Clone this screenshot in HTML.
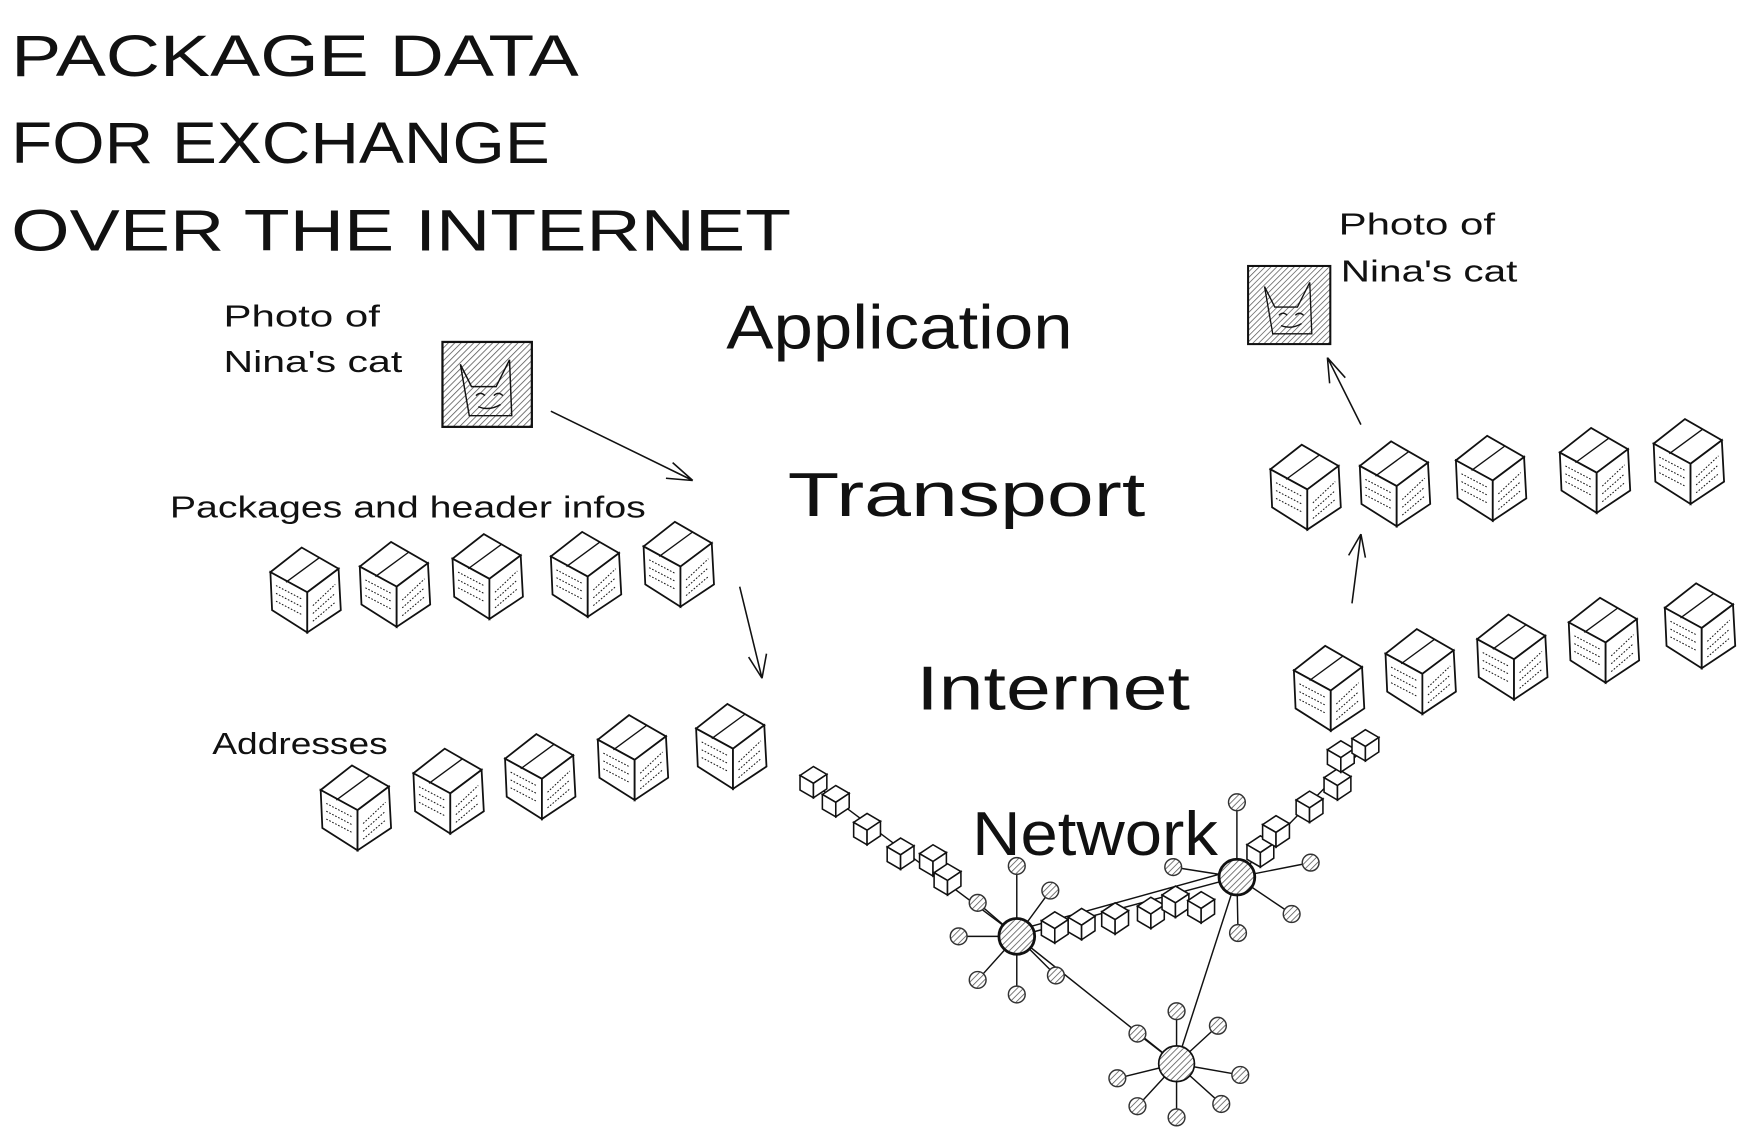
<!DOCTYPE html>
<html><head><meta charset="utf-8"><style>
html,body{margin:0;padding:0;background:#fff;width:1752px;height:1142px;overflow:hidden}
svg{display:block}
text{font-family:"Liberation Sans",sans-serif;fill:#111}
</style></head><body>
<svg width="1752" height="1142" viewBox="0 0 1568 1022" xmlns="http://www.w3.org/2000/svg">
<defs>
<pattern id="h" width="4" height="4" patternUnits="userSpaceOnUse" patternTransform="rotate(45)"><rect width="4" height="4" fill="#fff"/><line x1="0" y1="0" x2="0" y2="4" stroke="#555" stroke-width="1.4"/></pattern>
<g id="cube" fill="none" stroke="#111" stroke-width="1.6">
<path d="M0 22 L28 0 L61 19 L33 40 Z" fill="#fff"/>
<path d="M0 22 L33 40 L33 76 L1.5 56 Z" fill="#fff"/>
<path d="M33 40 L61 19 L63 56 L33 76 Z" fill="#fff"/>
<path d="M14 31 L44 9" stroke-width="1.2"/>
<g stroke-width="0.9" stroke-dasharray="1.5 1.5">
<path d="M5 34 L28 46 M5 41 L28 53 M5 48 L28 60"/>
<path d="M38 52 L58 33 M38 59 L58 41 M38 66 L58 49"/>
</g>
</g>
<g id="sc" fill="#fff" stroke="#111" stroke-width="1.4">
<path d="M0 8 L12 0 L24 7 L12 15 Z"/><path d="M0 8 L12 15 L12 28 L0 21 Z"/><path d="M12 15 L24 7 L24 20 L12 28 Z"/>
</g>
<g id="cat">
<rect x="0" y="0" width="80" height="76" fill="url(#h)" stroke="#111" stroke-width="2"/>
<path d="M16 20 L26 40 L48 40 L60 16 L62 66 L24 66 Z" fill="none" stroke="#111" stroke-width="1.3"/>
<path d="M30 48 q4 -4 8 0 M46 48 q4 -4 8 0 M32 58 q10 4 20 -2" fill="none" stroke="#111" stroke-width="1.3"/>
</g>
<g id="leaf"><circle r="7.5" fill="url(#h)" stroke="#333" stroke-width="1.3"/></g>
</defs>

<text x="10" y="68" font-size="52" textLength="508" lengthAdjust="spacingAndGlyphs">PACKAGE DATA</text>
<text x="10" y="146" font-size="52" textLength="482" lengthAdjust="spacingAndGlyphs">FOR EXCHANGE</text>
<text x="10" y="224" font-size="52" textLength="698" lengthAdjust="spacingAndGlyphs">OVER THE INTERNET</text>

<text x="650" y="312" font-size="56" textLength="310" lengthAdjust="spacingAndGlyphs">Application</text>
<text x="705" y="462" font-size="56" textLength="320" lengthAdjust="spacingAndGlyphs">Transport</text>
<text x="820" y="635" font-size="56" textLength="245" lengthAdjust="spacingAndGlyphs">Internet</text>
<text x="870" y="765" font-size="56" textLength="220" lengthAdjust="spacingAndGlyphs">Network</text>

<text x="200" y="292" font-size="27" textLength="140" lengthAdjust="spacingAndGlyphs">Photo of</text>
<text x="200" y="333" font-size="27" textLength="160" lengthAdjust="spacingAndGlyphs">Nina's cat</text>
<text x="1198" y="210" font-size="27" textLength="140" lengthAdjust="spacingAndGlyphs">Photo of</text>
<text x="1200" y="252" font-size="27" textLength="158" lengthAdjust="spacingAndGlyphs">Nina's cat</text>
<text x="152" y="463" font-size="27" textLength="426" lengthAdjust="spacingAndGlyphs">Packages and header infos</text>
<text x="190" y="675" font-size="27" textLength="157" lengthAdjust="spacingAndGlyphs">Addresses</text>

<use href="#cat" x="396" y="306"/>
<use href="#cat" x="1117" y="238" transform="translate(1117 238) scale(0.92) translate(-1117 -238)"/>

<g fill="none" stroke="#111" stroke-width="1.4">
<path d="M493 368 L620 430 M620 430 L596 428 M620 430 L602 414"/>
<path d="M662 525 L682 607 M682 607 L670 588 M682 607 L686 585"/>
<path d="M1210 540 L1218 478 M1218 478 L1207 497 M1218 478 L1222 499"/>
<path d="M1218 380 L1188 320 M1188 320 L1190 343 M1188 320 L1204 338"/>
</g>

<use href="#cube" x="242" y="490"/><use href="#cube" x="322" y="485"/><use href="#cube" x="405" y="478"/><use href="#cube" x="493" y="476"/><use href="#cube" x="576" y="467"/>
<use href="#cube" x="287" y="685"/><use href="#cube" x="370" y="670"/><use href="#cube" x="452" y="657"/><use href="#cube" x="535" y="640"/><use href="#cube" x="623" y="630"/>
<use href="#cube" x="1137" y="398"/><use href="#cube" x="1217" y="395"/><use href="#cube" x="1303" y="390"/><use href="#cube" x="1396" y="383"/><use href="#cube" x="1480" y="375"/>
<use href="#cube" x="1158" y="578"/><use href="#cube" x="1240" y="563"/><use href="#cube" x="1322" y="550"/><use href="#cube" x="1404" y="535"/><use href="#cube" x="1490" y="522"/>

<g stroke="#111" stroke-width="1.3" fill="none">
<path d="M720 695 L907 835"/>
<path d="M910 838 L1107 785 M912 832 L1100 780"/>
<path d="M910 838 L1053 952"/>
<path d="M1107 785 L1053 952"/>
<path d="M1107 785 L1230 660"/>
<path d="M910 838 L910 775 M910 838 L940 797 M910 838 L858 838 M910 838 L875 877 M910 838 L910 890 M910 838 L945 873 M910 838 L875 808"/>
<path d="M1107 785 L1107 718 M1107 785 L1173 772 M1107 785 L1156 818 M1107 785 L1108 835 M1107 785 L1050 776"/>
<path d="M1053 952 L1053 905 M1053 952 L1090 918 M1053 952 L1110 962 M1053 952 L1093 988 M1053 952 L1053 1000 M1053 952 L1018 990 M1053 952 L1000 965 M1053 952 L1018 925"/>
</g>
<use href="#sc" x="716" y="686"/><use href="#sc" x="736" y="703"/><use href="#sc" x="764" y="728"/><use href="#sc" x="794" y="750"/><use href="#sc" x="823" y="756"/><use href="#sc" x="836" y="773"/>
<use href="#sc" x="932" y="816"/><use href="#sc" x="956" y="813"/><use href="#sc" x="986" y="808"/><use href="#sc" x="1018" y="803"/><use href="#sc" x="1040" y="793"/><use href="#sc" x="1063" y="798"/>
<use href="#sc" x="1116" y="748"/><use href="#sc" x="1130" y="730"/><use href="#sc" x="1160" y="708"/><use href="#sc" x="1185" y="688"/><use href="#sc" x="1188" y="663"/><use href="#sc" x="1210" y="653"/>

<g fill="url(#h)" stroke="#111" stroke-width="2.5">
<circle cx="910" cy="838" r="16"/><circle cx="1107" cy="785" r="16"/><circle cx="1053" cy="952" r="16" stroke-width="1.5"/>
</g>
<use href="#leaf" x="910" y="775"/><use href="#leaf" x="940" y="797"/><use href="#leaf" x="858" y="838"/><use href="#leaf" x="875" y="877"/><use href="#leaf" x="910" y="890"/><use href="#leaf" x="945" y="873"/><use href="#leaf" x="875" y="808"/>
<use href="#leaf" x="1107" y="718"/><use href="#leaf" x="1173" y="772"/><use href="#leaf" x="1156" y="818"/><use href="#leaf" x="1108" y="835"/><use href="#leaf" x="1050" y="776"/>
<use href="#leaf" x="1053" y="905"/><use href="#leaf" x="1090" y="918"/><use href="#leaf" x="1110" y="962"/><use href="#leaf" x="1093" y="988"/><use href="#leaf" x="1053" y="1000"/><use href="#leaf" x="1018" y="990"/><use href="#leaf" x="1000" y="965"/><use href="#leaf" x="1018" y="925"/>
</svg>
</body></html>
